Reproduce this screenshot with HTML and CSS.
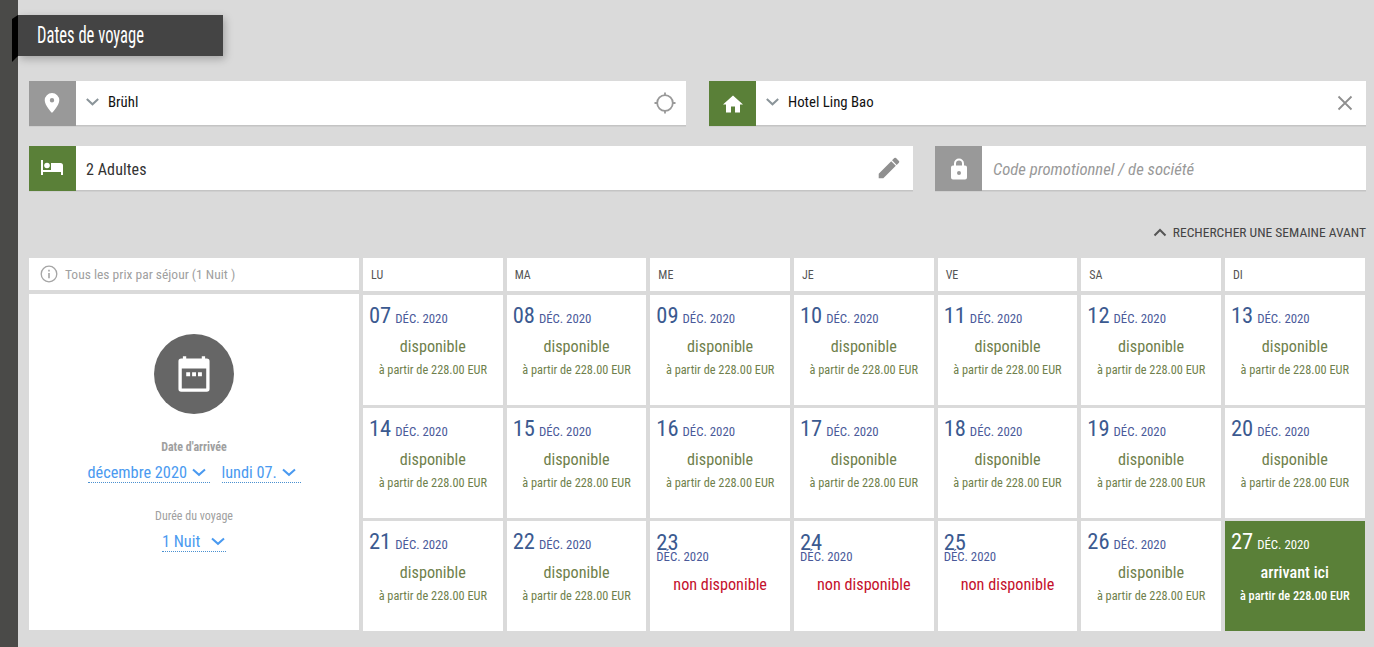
FILE: index.html
```html
<!DOCTYPE html>
<html lang="fr">
<head>
<meta charset="utf-8">
<title>Dates de voyage</title>
<link rel="stylesheet" href="styles.css">
</head>
<body>
<aside class="rail"></aside>
<main class="main">
  <header class="title-wrap"><h1 class="title"><span class="title-text">Dates de voyage</span></h1></header>

  <div class="fields fields-a">
    <div class="field">
      <span class="tile tile-grey"><svg class="pin" width="24" height="24" viewBox="0 0 24 24"><path fill="#fff" d="M12 2a7.300 7.300 0 0 0-7.300 7.300C4.700 14.500 12 22 12 22s7.300-7.500 7.300-12.700A7.300 7.300 0 0 0 12 2zm0 9.500a2.200 2.200 0 1 1 0-4.400 2.200 2.200 0 0 1 0 4.400z"/></svg></span>
      <svg class="chev" width="13" height="8" viewBox="0 0 13 8"><path d="M.8 1l5.700 5.300L12.200 1" fill="none" stroke="#8a9499" stroke-width="2"/></svg>
      <span class="value">Brühl</span>
      <svg class="end-icon" width="24" height="24" viewBox="0 0 24 24"><circle cx="12" cy="12" r="7.800" fill="none" stroke="#999" stroke-width="1.800"/><path d="M12 1.500v3.500M12 19v3.500M1.500 12H5M19 12h3.500" stroke="#999" stroke-width="1.800"/></svg>
    </div>
    <div class="field">
      <span class="tile tile-green"><svg width="24" height="24" viewBox="0 0 24 24"><path fill="#fff" d="M10 20.500v-6h4v6h5v-8h3L12 3.500 2 12.500h3v8z"/></svg></span>
      <svg class="chev" width="13" height="8" viewBox="0 0 13 8"><path d="M.8 1l5.700 5.300L12.200 1" fill="none" stroke="#8a9499" stroke-width="2"/></svg>
      <span class="value">Hotel Ling Bao</span>
      <svg class="end-icon" width="24" height="24" viewBox="0 0 24 24"><path d="M5.500 5.500l13 13M18.500 5.500l-13 13" stroke="#8f8f8f" stroke-width="1.800" fill="none"/></svg>
    </div>
  </div>

  <div class="fields fields-b">
    <div class="field field-edit">
      <span class="tile tile-green"><svg class="bed" width="26" height="26" viewBox="0 0 26 26"><path fill="#fff" d="M2 5h2v10h8V8h9.500A2.500 2.500 0 0 1 24 10.500V20h-2v-3H4v3H2z"/><circle cx="8" cy="10.500" r="2.800" fill="#fff"/></svg></span>
      <span class="value value-large">2 Adultes</span>
      <svg class="end-icon" width="26" height="26" viewBox="0 0 24 24"><path fill="#8f8f8f" d="M2.500 17.250V21.500h4.250L18.300 9.950l-4.250-4.250zM21.150 7.100a1.130 1.130 0 0 0 0-1.600l-2.650-2.650a1.130 1.130 0 0 0-1.600 0l-2.070 2.070 4.250 4.250z"/></svg>
    </div>
    <div class="field">
      <span class="tile tile-grey"><svg width="24" height="24" viewBox="0 0 24 24"><path fill="#fff" d="M18 8.500h-1V6.500a5 5 0 0 0-10 0v2H6a2 2 0 0 0-2 2v10a2 2 0 0 0 2 2h12a2 2 0 0 0 2-2v-10a2 2 0 0 0-2-2zM9 6.500a3 3 0 0 1 6 0v2H9zm3 11.500a2 2 0 1 1 0-4 2 2 0 0 1 0 4z"/></svg></span>
      <span class="value value-large placeholder">Code promotionnel / de société</span>
    </div>
  </div>

  <div class="week-link">
    <svg width="14" height="9" viewBox="0 0 14 9"><path d="M1.500 7.500L7 2l5.500 5.500" fill="none" stroke="#555" stroke-width="2"/></svg>
    <span>RECHERCHER UNE SEMAINE AVANT</span>
  </div>

  <section class="calendar">
    <div class="note">
      <svg width="18" height="18" viewBox="0 0 18 18"><circle cx="9" cy="9" r="7.800" fill="none" stroke="#a5a5a5" stroke-width="1.300"/><path d="M8.200 8h1.600v5.300H8.200zM8.200 4.800h1.600v1.600H8.200z" fill="#a5a5a5"/></svg>
      <span>Tous les prix par séjour (1 Nuit )</span>
    </div>
    <div class="dow">LU</div><div class="dow">MA</div><div class="dow">ME</div><div class="dow">JE</div><div class="dow">VE</div><div class="dow">SA</div><div class="dow">DI</div>

    <div class="panel">
      <div class="badge"><svg width="40" height="40" viewBox="0 0 36 36"><path fill="#fff" d="M8 2h3v2h14V2h3v2h1.500A2.500 2.500 0 0 1 32 6.500v25a2.500 2.500 0 0 1-2.500 2.500h-23A2.500 2.500 0 0 1 4 31.500v-25A2.500 2.500 0 0 1 6.500 4H8zM7 13v18h22V13z"/><path fill="#fff" d="M11 16.500h3.500V20H11zM16.300 16.500h3.500V20h-3.500zM21.600 16.500h3.500V20h-3.500z"/></svg></div>
      <div class="panel-label panel-label-strong">Date d'arrivée</div>
      <div class="selects">
        <span class="select select-month">décembre 2020 <svg width="14" height="9" viewBox="0 0 14 9"><path d="M1 1.500l6 5.300 6-5.300" fill="none" stroke="#4a9af0" stroke-width="2"/></svg></span>
        <span class="select select-day">lundi 07. <svg width="14" height="9" viewBox="0 0 14 9"><path d="M1 1.500l6 5.300 6-5.300" fill="none" stroke="#4a9af0" stroke-width="2"/></svg></span>
      </div>
      <div class="panel-label panel-label-second">Durée du voyage</div>
      <div class="selects">
        <span class="select select-night">1 Nuit <svg width="14" height="9" viewBox="0 0 14 9"><path d="M1 1.500l6 5.300 6-5.300" fill="none" stroke="#4a9af0" stroke-width="2"/></svg></span>
      </div>
    </div>

    <div class="day"><div class="day-head"><b>07</b><span>DÉC. 2020</span></div><p class="status">disponible</p><p class="price">à partir de 228.00 EUR</p></div>
    <div class="day"><div class="day-head"><b>08</b><span>DÉC. 2020</span></div><p class="status">disponible</p><p class="price">à partir de 228.00 EUR</p></div>
    <div class="day"><div class="day-head"><b>09</b><span>DÉC. 2020</span></div><p class="status">disponible</p><p class="price">à partir de 228.00 EUR</p></div>
    <div class="day"><div class="day-head"><b>10</b><span>DÉC. 2020</span></div><p class="status">disponible</p><p class="price">à partir de 228.00 EUR</p></div>
    <div class="day"><div class="day-head"><b>11</b><span>DÉC. 2020</span></div><p class="status">disponible</p><p class="price">à partir de 228.00 EUR</p></div>
    <div class="day"><div class="day-head"><b>12</b><span>DÉC. 2020</span></div><p class="status">disponible</p><p class="price">à partir de 228.00 EUR</p></div>
    <div class="day"><div class="day-head"><b>13</b><span>DÉC. 2020</span></div><p class="status">disponible</p><p class="price">à partir de 228.00 EUR</p></div>

    <div class="day"><div class="day-head"><b>14</b><span>DÉC. 2020</span></div><p class="status">disponible</p><p class="price">à partir de 228.00 EUR</p></div>
    <div class="day"><div class="day-head"><b>15</b><span>DÉC. 2020</span></div><p class="status">disponible</p><p class="price">à partir de 228.00 EUR</p></div>
    <div class="day"><div class="day-head"><b>16</b><span>DÉC. 2020</span></div><p class="status">disponible</p><p class="price">à partir de 228.00 EUR</p></div>
    <div class="day"><div class="day-head"><b>17</b><span>DÉC. 2020</span></div><p class="status">disponible</p><p class="price">à partir de 228.00 EUR</p></div>
    <div class="day"><div class="day-head"><b>18</b><span>DÉC. 2020</span></div><p class="status">disponible</p><p class="price">à partir de 228.00 EUR</p></div>
    <div class="day"><div class="day-head"><b>19</b><span>DÉC. 2020</span></div><p class="status">disponible</p><p class="price">à partir de 228.00 EUR</p></div>
    <div class="day"><div class="day-head"><b>20</b><span>DÉC. 2020</span></div><p class="status">disponible</p><p class="price">à partir de 228.00 EUR</p></div>

    <div class="day"><div class="day-head"><b>21</b><span>DÉC. 2020</span></div><p class="status">disponible</p><p class="price">à partir de 228.00 EUR</p></div>
    <div class="day"><div class="day-head"><b>22</b><span>DÉC. 2020</span></div><p class="status">disponible</p><p class="price">à partir de 228.00 EUR</p></div>
    <div class="day day-off"><div class="day-head"><b>23</b><span>DÉC. 2020</span></div><p class="status">non disponible</p></div>
    <div class="day day-off"><div class="day-head"><b>24</b><span>DÉC. 2020</span></div><p class="status">non disponible</p></div>
    <div class="day day-off"><div class="day-head"><b>25</b><span>DÉC. 2020</span></div><p class="status">non disponible</p></div>
    <div class="day"><div class="day-head"><b>26</b><span>DÉC. 2020</span></div><p class="status">disponible</p><p class="price">à partir de 228.00 EUR</p></div>
    <div class="day day-on"><div class="day-head"><b>27</b><span>DÉC. 2020</span></div><p class="status">arrivant ici</p><p class="price">à partir de 228.00 EUR</p></div>
  </section>
</main>
</body>
</html>
```

FILE: styles.css
```css
* { box-sizing: border-box; }
html, body { height: 100%; }
body {
  margin: 0;
  display: flex;
  overflow: hidden;
  background: #dadada;
  font-family: "Roboto Condensed", "Liberation Sans Narrow", Roboto, sans-serif;
  font-stretch: 75%;
  color: #333;
}
.rail { flex: 0 0 18px; background: #4a4a48; }
.main { flex: 1; min-width: 0; padding: 15px 8px 0 11px; }

.title-wrap { height: 66px; }
.title {
  position: relative;
  display: flex;
  align-items: center;
  width: 205px;
  height: 41px;
  margin: 0 0 0 -11px;
  padding-left: 19px;
  background: #444;
  color: #fff;
  font-size: 23px;
  font-weight: 400;
  box-shadow: 2px 3px 8px rgba(0,0,0,.25);
}
.title-text { display: inline-block; transform: scaleX(.72); transform-origin: left center; white-space: nowrap; }
.title::before {
  content: "";
  position: absolute;
  left: -6px;
  top: 0;
  width: 6px;
  height: 47px;
  background: #000;
  clip-path: polygon(0 4px, 100% 0, 100% 41px, 0 100%);
}

.fields { display: grid; gap: 22px; height: 45px; margin-bottom: 20px; }
.fields-a { grid-template-columns: 657px 657px; gap: 23px; }
.fields-b { grid-template-columns: 884px 431px; }
.field {
  display: flex;
  align-items: center;
  height: 45px;
  padding-right: 9px;
  background: #fff;
  border-bottom: 1px solid #c4c4c4;
  box-shadow: 0 1px 0 #cfcfcf;
  font-size: 15px;
}
.field-edit { padding-right: 11px; }
.tile {
  flex: 0 0 47px;
  display: flex;
  align-items: center;
  justify-content: center;
  height: 45px;
  margin-bottom: -1px;
  margin-right: 10px;
}
.tile-grey { background: #999; }
.tile-green { background: #5a8038; }
.pin { margin-left: -1px; margin-top: -1px; }
.bed { margin-left: -2px; margin-top: -1px; }
.chev { flex: none; margin-right: 9px; margin-top: -2px; }
.value { flex: 1; color: #111; margin-top: -2px; font-size: 14.8px; }
.value-large { font-size: 16px; color: #333; margin-top: 3px; letter-spacing: .1px; }
.placeholder { color: #999; font-style: italic; font-size: 16.7px; letter-spacing: 0; margin-left: 1px; }
.end-icon { flex: none; }

.week-link {
  display: flex;
  align-items: center;
  justify-content: flex-end;
  gap: 6px;
  height: 20px;
  margin-top: 31px;
  font-size: 13.5px;
  color: #444;
}

.calendar {
  display: grid;
  grid-template-columns: 330px repeat(7, 139.67px);
  grid-template-rows: 34px 110px 110px 110px;
  gap: 3px 4px;
  margin-top: 16px;
}
.note {
  display: flex;
  align-items: center;
  gap: 7px;
  padding-left: 11px;
  background: #fff;
  height: 32px;
  color: #a0a0a0;
  font-size: 13.5px;
}
.dow {
  display: flex;
  align-items: center;
  height: 33px;
  padding-left: 8px;
  background: #fff;
  color: #555;
  font-size: 12px;
}
.panel {
  grid-row: 2 / span 3;
  display: flex;
  flex-direction: column;
  align-items: center;
  margin-top: -1px;
  margin-bottom: 1px;
  padding-top: 40px;
  background: #fff;
}
.badge {
  display: flex;
  align-items: center;
  justify-content: center;
  width: 80px;
  height: 80px;
  border-radius: 50%;
  background: #666;
}
.panel-label { color: #a0a0a0; font-size: 12px; }
.panel-label-strong { margin-top: 26px; font-weight: 700; }
.panel-label-second { margin-top: 26px; }
.selects { display: flex; justify-content: center; gap: 12px; margin-top: 9px; }
.select {
  display: flex;
  align-items: center;
  gap: 1px;
  border-bottom: 1px dotted #4a90d0;
  color: #4a9af0;
  font-size: 16.3px;
  line-height: 19px;
  white-space: pre;
}
.select svg { flex: none; }
.select-month { width: 122px; }
.select-day { width: 79px; }
.select-night { width: 64px; gap: 7px; }

.day { padding: 7px 6px 0; background: #fff; text-align: center; }
.day-head { display: flex; flex-wrap: wrap; align-items: baseline; gap: 0 4px; text-align: left; color: #3b5a90; }
.day-head b { font-size: 22.5px; line-height: 27px; font-weight: 400; }
.day-head span { font-size: 12.8px; color: #4a5a9a; }
.status { margin: 8px 0 0; font-size: 16.2px; line-height: 20px; color: #6f7f4c; }
.price { margin: 4px 0 0; font-size: 12.3px; line-height: 18px; color: #6f7f4c; }
.day-off .day-head { display: block; }
.day-off .day-head b { display: block; margin-top: 4.5px; line-height: 18px; }
.day-off .day-head span { display: block; line-height: 12px; }
.day-off .status { margin-top: 12.5px; color: #c4102c; }
.day-on { background: #5a8038; }
.day-on .day-head, .day-on .day-head span, .day-on .status, .day-on .price { color: #fff; }
.day-on .status, .day-on .price { font-weight: 500; }
```
